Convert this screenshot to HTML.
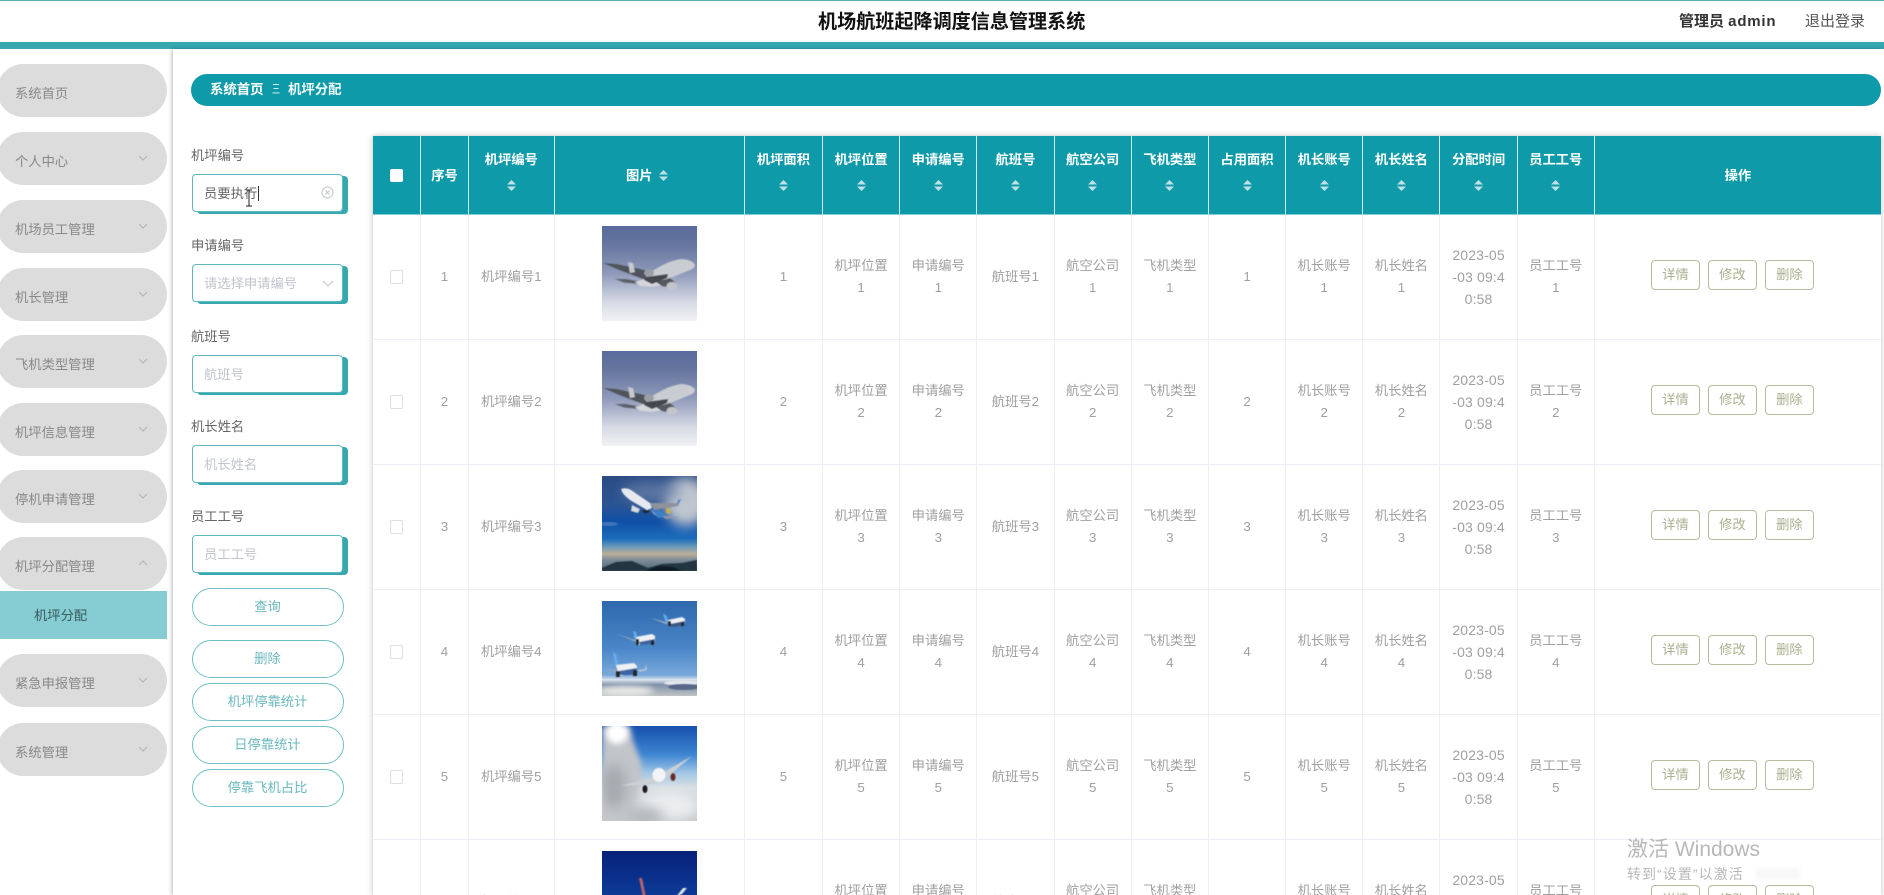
<!DOCTYPE html>
<html lang="zh-CN">
<head>
<meta charset="utf-8">
<title>机场航班起降调度信息管理系统</title>
<style>
*{box-sizing:border-box;margin:0;padding:0}
html,body{width:1884px;height:895px;overflow:hidden;background:#fff}
body{font-family:"Liberation Sans","Noto Sans CJK SC",sans-serif;font-size:13.3px;color:#a0a0a0}
#w{position:relative;width:1884px;height:895px;overflow:hidden;filter:blur(.35px)}
.a{position:absolute}
.pill{position:absolute;left:-3px;width:170px;height:53px;border-radius:27px;background:#dcdcdc;color:#888;padding-left:18px;line-height:59px;white-space:nowrap}
.pill svg{position:absolute;left:141px;top:23px}
.lab{position:absolute;left:191px;color:#666;line-height:20px}
.inp{position:absolute;left:192px;width:151px;height:38px;background:#fff;border:1px solid #5fb8be;border-radius:4px;box-shadow:5px 2px 0 #37a8b0;line-height:38px;padding-left:11px;color:#c0c4cc}
.btn{position:absolute;left:191.5px;width:152px;height:38px;border:1px solid #6fc0c7;border-radius:19px;background:#fff;color:#6bb8be;text-align:center;line-height:35px}
table{position:absolute;left:373px;top:136px;width:1508px;table-layout:fixed;border-collapse:separate;border-spacing:0}
th{height:78.5px;background:#0f9aaa;color:#fff;font-weight:700;border-right:1px solid #cfeaed;border-bottom:1px solid #7fd0d8;position:relative;text-align:center;white-space:nowrap;font-size:13.3px}
th:last-child{border-right:0}
th span{position:absolute;left:0;right:0;top:13px;line-height:22px}
th svg.s{position:absolute;left:50%;margin-left:-4.5px;top:44px}
td{height:125px;border-right:1px solid #ebeef5;border-bottom:1px solid #ebeef5;text-align:center;vertical-align:middle;line-height:22px;white-space:nowrap;padding:0}
td:last-child{border-right:0}
td.d{font-size:14px;letter-spacing:.15px}
.cb{display:inline-block;width:13px;height:14px;border:1px solid #dcdfe6;border-radius:2px;background:#fff;vertical-align:middle}
.op{display:inline-block;width:48.6px;height:30px;border:1px solid #b5bca0;border-radius:4px;color:#a9b18f;line-height:27px;margin:0 4.2px;position:relative;top:-2px;left:-5.5px;background:#fff}
td svg.im{display:block;margin:0 auto;width:95px;height:95px;position:relative;top:-3px}
</style>
</head>
<body>
<div id="w">
<svg width="0" height="0" style="position:absolute">
<defs>
<linearGradient id="g1" x1="0" y1="0" x2="0" y2="1"><stop offset="0" stop-color="#5a6a9c"/><stop offset=".2" stop-color="#66769f"/><stop offset=".5" stop-color="#8f9abb"/><stop offset=".8" stop-color="#d6dae4"/><stop offset="1" stop-color="#f1f2f4"/></linearGradient>
<linearGradient id="g3" x1="0" y1="0" x2="0" y2="1"><stop offset="0" stop-color="#2c4c84"/><stop offset=".3" stop-color="#2b5493"/><stop offset=".48" stop-color="#0f50a6"/><stop offset=".66" stop-color="#1c6cbc"/><stop offset=".75" stop-color="#6f9cb8"/><stop offset=".82" stop-color="#bcae94"/><stop offset=".88" stop-color="#7f8d98"/><stop offset="1" stop-color="#4f6474"/></linearGradient>
<linearGradient id="g4" x1="0" y1="0" x2="0" y2="1"><stop offset="0" stop-color="#2f68ad"/><stop offset=".5" stop-color="#4a86c8"/><stop offset=".78" stop-color="#78a8da"/><stop offset=".83" stop-color="#dbe4ee"/><stop offset=".88" stop-color="#7f91aa"/><stop offset="1" stop-color="#bfc3c4"/></linearGradient>
<linearGradient id="g5" x1="0" y1="0" x2="0" y2="1"><stop offset="0" stop-color="#1550ae"/><stop offset=".3" stop-color="#3e86d2"/><stop offset=".5" stop-color="#a4c8e6"/><stop offset=".65" stop-color="#d8dee2"/><stop offset="1" stop-color="#c6c8ca"/></linearGradient>
<linearGradient id="g6" x1="0" y1="0" x2="0" y2="1"><stop offset="0" stop-color="#06217a"/><stop offset="1" stop-color="#1458b8"/></linearGradient>
<filter id="b1" x="-20%" y="-20%" width="140%" height="140%"><feGaussianBlur stdDeviation=".6"/></filter>
<filter id="b2" x="-40%" y="-40%" width="180%" height="180%"><feGaussianBlur stdDeviation="3"/></filter>
<filter id="b3" x="-40%" y="-40%" width="180%" height="180%"><feGaussianBlur stdDeviation="6"/></filter>
<symbol id="pA" viewBox="0 0 95 95">
<rect width="95" height="95" fill="url(#g1)"/>
<g filter="url(#b1)">
<path d="M1 37 L14 38 L38 43 L64 50 L60 55 L44 54 L20 45Z" fill="#50535c"/>
<path d="M13 53 L24 53 L40 56 L38 58 L22 56.500Z" fill="#5c606a"/>
<path d="M33 56 L46 52 L58 56 L66 58 L50 61 L38 60Z" fill="#d3d5d8"/>
<path d="M26 36 L31 37 L33 46 L28 47Z" fill="#c5c8cc"/>
<path d="M93 39 Q91 34 80 33 Q68 34 52 44 L44 50 L50 56 L66 53 L88 44 Q93 42 93 39Z" fill="#c9ccd1"/>
<path d="M44 51 L66 48 L65 52 L50 58 L42 54Z" fill="#44474f"/>
<path d="M54 56 L68 52 L75 58 L72 62 L60 60Z" fill="#55585f"/>
<ellipse cx="70" cy="60" rx="5.500" ry="4" fill="#c2c5c9"/>
<ellipse cx="47" cy="47" rx="5" ry="3.500" fill="#9b9ea4"/>
</g>
</symbol>
</defs>
</svg>

<!-- header -->
<div class="a" style="left:0;top:0;width:1884px;height:1px;background:#5fb0b5"></div>
<div class="a" style="left:0;top:42px;width:1884px;height:7px;background:#37a8b0"></div>
<div class="a" style="left:818px;top:10px;width:270px;font-size:19.1px;font-weight:700;color:#111;line-height:26px;white-space:nowrap">机场航班起降调度信息管理系统</div>
<div class="a" style="left:1679px;top:11px;font-size:15px;font-weight:700;color:#333;line-height:22px;white-space:nowrap">管理员 <span style="letter-spacing:.8px">admin</span></div>
<div class="a" style="left:1805px;top:11px;font-size:15px;color:#555;line-height:22px;white-space:nowrap">退出登录</div>

<!-- dividers -->
<div class="a" style="left:173px;top:49px;width:1711px;height:846px;background:#fff;box-shadow:-1px 0 4px rgba(0,0,0,.28)"></div>
<div class="a" style="left:373px;top:136px;width:1508px;height:760px;background:#fff;box-shadow:0 0 6px rgba(0,0,0,.25)"></div>

<!-- sidebar -->
<div class="pill" style="top:64px">系统首页</div>
<div class="pill" style="top:132px">个人中心<svg width="10" height="7" viewBox="0 0 10 7"><path d="M1 1l4 4 4-4" fill="none" stroke="#b4b4b4"/></svg></div>
<div class="pill" style="top:199.5px">机场员工管理<svg width="10" height="7" viewBox="0 0 10 7"><path d="M1 1l4 4 4-4" fill="none" stroke="#b4b4b4"/></svg></div>
<div class="pill" style="top:267.5px">机长管理<svg width="10" height="7" viewBox="0 0 10 7"><path d="M1 1l4 4 4-4" fill="none" stroke="#b4b4b4"/></svg></div>
<div class="pill" style="top:335px">飞机类型管理<svg width="10" height="7" viewBox="0 0 10 7"><path d="M1 1l4 4 4-4" fill="none" stroke="#b4b4b4"/></svg></div>
<div class="pill" style="top:402.5px">机坪信息管理<svg width="10" height="7" viewBox="0 0 10 7"><path d="M1 1l4 4 4-4" fill="none" stroke="#b4b4b4"/></svg></div>
<div class="pill" style="top:470px">停机申请管理<svg width="10" height="7" viewBox="0 0 10 7"><path d="M1 1l4 4 4-4" fill="none" stroke="#b4b4b4"/></svg></div>
<div class="pill" style="top:537px">机坪分配管理<svg width="10" height="7" viewBox="0 0 10 7"><path d="M1 5l4-4 4 4" fill="none" stroke="#b4b4b4"/></svg></div>
<div class="a" style="left:0;top:591px;width:167px;height:48px;background:#86ccd3;color:#3a5a5e;padding-left:34px;line-height:50px">机坪分配</div>
<div class="pill" style="top:654px">紧急申报管理<svg width="10" height="7" viewBox="0 0 10 7"><path d="M1 1l4 4 4-4" fill="none" stroke="#b4b4b4"/></svg></div>
<div class="pill" style="top:722.5px">系统管理<svg width="10" height="7" viewBox="0 0 10 7"><path d="M1 1l4 4 4-4" fill="none" stroke="#b4b4b4"/></svg></div>

<!-- breadcrumb -->
<div class="a" style="left:191px;top:74px;width:1690px;height:32px;border-radius:16px;background:#0f9aaa"></div>
<div class="a" style="left:210px;top:80px;color:#fff;font-weight:700;font-size:13.4px;line-height:20px">系统首页</div>
<div class="a" style="left:272px;top:80px;color:#eef9fa;font-size:8px;line-height:20px;transform:scaleY(1.5);transform-origin:center">三</div>
<div class="a" style="left:288px;top:80px;color:#f2fafa;font-size:13.4px;font-weight:700;line-height:20px">机坪分配</div>

<!-- form -->
<div class="lab" style="top:146px">机坪编号</div>
<div class="inp" style="top:173.5px;color:#666">员要执行
<svg class="a" style="left:128px;top:11px" width="13" height="13" viewBox="0 0 13 13"><circle cx="6.5" cy="6.5" r="5.5" fill="none" stroke="#c0c4cc"/><path d="M4.5 4.5l4 4M8.500 4.500l-4 4" stroke="#c0c4cc"/></svg>
</div>
<div class="a" style="left:258px;top:186px;width:1px;height:15px;background:#333"></div>
<svg class="a" style="left:245px;top:189px" width="8" height="19" viewBox="0 0 8 19"><path d="M1 1h6M4 1v16M1 17h6" fill="none" stroke="#222"/></svg>

<div class="lab" style="top:236px">申请编号</div>
<div class="inp" style="top:264px">请选择申请编号
<svg class="a" style="left:129px;top:15px" width="12" height="8" viewBox="0 0 12 8"><path d="M1 1l5 5 5-5" fill="none" stroke="#c0c4cc"/></svg>
</div>
<div class="lab" style="top:326.500px">航班号</div>
<div class="inp" style="top:354.500px">航班号</div>
<div class="lab" style="top:416.500px">机长姓名</div>
<div class="inp" style="top:445px">机长姓名</div>
<div class="lab" style="top:507px">员工工号</div>
<div class="inp" style="top:535px">员工工号</div>

<div class="btn" style="top:588px">查询</div>
<div class="btn" style="top:640px">删除</div>
<div class="btn" style="top:683px">机坪停靠统计</div>
<div class="btn" style="top:726px">日停靠统计</div>
<div class="btn" style="top:768.500px">停靠飞机占比</div>

<!-- table -->
<table>
<colgroup><col style="width:48px"><col style="width:48px"><col style="width:85.500px"><col style="width:190.300px"><col style="width:78.200px"><col style="width:77.200px"><col style="width:77.200px"><col style="width:77.200px"><col style="width:77.200px"><col style="width:77.200px"><col style="width:77.200px"><col style="width:77.200px"><col style="width:77.200px"><col style="width:77.200px"><col style="width:77.200px"><col></colgroup>
<thead><tr>
<th><i class="a" style="left:17px;top:33px;width:13px;height:13px;background:#fff;border-radius:2px"></i></th>
<th>序号</th>
<th><span>机坪编号</span><svg class="s" width="9" height="11" viewBox="0 0 9 11"><path d="M0 4.500L4.500 0 9 4.500zM0 6.500h9L4.500 11z" fill="#bfe0e4"/></svg></th>
<th style="padding-right:4px">图片 <svg width="9" height="11" viewBox="0 0 9 11" style="margin-left:3px;vertical-align:-1px"><path d="M0 4.500L4.500 0 9 4.500zM0 6.500h9L4.500 11z" fill="#bfe0e4"/></svg></th>
<th><span>机坪面积</span><svg class="s" width="9" height="11" viewBox="0 0 9 11"><path d="M0 4.500L4.500 0 9 4.500zM0 6.500h9L4.500 11z" fill="#bfe0e4"/></svg></th>
<th><span>机坪位置</span><svg class="s" width="9" height="11" viewBox="0 0 9 11"><path d="M0 4.500L4.500 0 9 4.500zM0 6.500h9L4.500 11z" fill="#bfe0e4"/></svg></th>
<th><span>申请编号</span><svg class="s" width="9" height="11" viewBox="0 0 9 11"><path d="M0 4.500L4.500 0 9 4.500zM0 6.500h9L4.500 11z" fill="#bfe0e4"/></svg></th>
<th><span>航班号</span><svg class="s" width="9" height="11" viewBox="0 0 9 11"><path d="M0 4.500L4.500 0 9 4.500zM0 6.500h9L4.500 11z" fill="#bfe0e4"/></svg></th>
<th><span>航空公司</span><svg class="s" width="9" height="11" viewBox="0 0 9 11"><path d="M0 4.500L4.500 0 9 4.500zM0 6.500h9L4.500 11z" fill="#bfe0e4"/></svg></th>
<th><span>飞机类型</span><svg class="s" width="9" height="11" viewBox="0 0 9 11"><path d="M0 4.500L4.500 0 9 4.500zM0 6.500h9L4.500 11z" fill="#bfe0e4"/></svg></th>
<th><span>占用面积</span><svg class="s" width="9" height="11" viewBox="0 0 9 11"><path d="M0 4.500L4.500 0 9 4.500zM0 6.500h9L4.500 11z" fill="#bfe0e4"/></svg></th>
<th><span>机长账号</span><svg class="s" width="9" height="11" viewBox="0 0 9 11"><path d="M0 4.500L4.500 0 9 4.500zM0 6.500h9L4.500 11z" fill="#bfe0e4"/></svg></th>
<th><span>机长姓名</span><svg class="s" width="9" height="11" viewBox="0 0 9 11"><path d="M0 4.500L4.500 0 9 4.500zM0 6.500h9L4.500 11z" fill="#bfe0e4"/></svg></th>
<th><span>分配时间</span><svg class="s" width="9" height="11" viewBox="0 0 9 11"><path d="M0 4.500L4.500 0 9 4.500zM0 6.500h9L4.500 11z" fill="#bfe0e4"/></svg></th>
<th><span>员工工号</span><svg class="s" width="9" height="11" viewBox="0 0 9 11"><path d="M0 4.500L4.500 0 9 4.500zM0 6.500h9L4.500 11z" fill="#bfe0e4"/></svg></th>
<th>操作</th>
</tr></thead>
<tbody>
<tr><td><i class="cb"></i></td><td>1</td><td>机坪编号1</td>
<td><svg class="im" viewBox="0 0 95 95"><use href="#pA"/></svg></td>
<td>1</td><td>机坪位置<br>1</td><td>申请编号<br>1</td><td>航班号1</td><td>航空公司<br>1</td><td>飞机类型<br>1</td><td>1</td><td>机长账号<br>1</td><td>机长姓名<br>1</td><td class="d">2023-05<br>-03 09:4<br>0:58</td><td>员工工号<br>1</td>
<td><span class="op">详情</span><span class="op">修改</span><span class="op">删除</span></td></tr>

<tr><td><i class="cb"></i></td><td>2</td><td>机坪编号2</td>
<td><svg class="im" viewBox="0 0 95 95"><use href="#pA"/></svg></td>
<td>2</td><td>机坪位置<br>2</td><td>申请编号<br>2</td><td>航班号2</td><td>航空公司<br>2</td><td>飞机类型<br>2</td><td>2</td><td>机长账号<br>2</td><td>机长姓名<br>2</td><td class="d">2023-05<br>-03 09:4<br>0:58</td><td>员工工号<br>2</td>
<td><span class="op">详情</span><span class="op">修改</span><span class="op">删除</span></td></tr>

<tr><td><i class="cb"></i></td><td>3</td><td>机坪编号3</td>
<td><svg class="im" viewBox="0 0 95 95">
<rect width="95" height="95" fill="url(#g3)"/>
<ellipse cx="84" cy="26" rx="22" ry="24" fill="#c0c6d0" filter="url(#b3)"/>
<ellipse cx="50" cy="16" rx="30" ry="10" fill="#6f85aa" opacity=".7" filter="url(#b3)"/>
<ellipse cx="6" cy="48" rx="10" ry="2" fill="#5f8cc4" opacity=".6" filter="url(#b1)"/>
<path d="M0 92 L14 86 L30 85 L46 92 L60 88 L80 87 L95 84 V95 H0Z" fill="#22343f" filter="url(#b1)"/>
<path d="M44 95 L56 90 L70 91 L80 95Z" fill="#101c26" filter="url(#b1)"/>
<g filter="url(#b1)">
<path d="M19 13 Q24 11 29 14 L48 27 L50 32 L45 34 L28 24 Q20 18 19 13Z" fill="#e6e9ee"/>
<path d="M48 27 L74 27 L78 24 L76 30 L52 34Z" fill="#8d929c"/>
<path d="M76 24 L79 23 L76 29Z" fill="#3a80d4"/>
<path d="M48 33 L58 34 L66 41 L56 42 Z" fill="#3d7ec4"/>
<path d="M47 33 L55 40 L52 38Z" fill="#f0f2f4"/>
<path d="M64 32 L69 33 L68 38 L64 37Z" fill="#c8b24a"/>
<path d="M60 40 L78 41 L64 43Z" fill="#9298a2"/>
<path d="M30 29 L38 33 L36 37 L29 35Z" fill="#d8dce0"/>
<path d="M40 34 L48 34 L46 37 L42 37Z" fill="#22282e"/>
</g>
</svg></td>
<td>3</td><td>机坪位置<br>3</td><td>申请编号<br>3</td><td>航班号3</td><td>航空公司<br>3</td><td>飞机类型<br>3</td><td>3</td><td>机长账号<br>3</td><td>机长姓名<br>3</td><td class="d">2023-05<br>-03 09:4<br>0:58</td><td>员工工号<br>3</td>
<td><span class="op">详情</span><span class="op">修改</span><span class="op">删除</span></td></tr>

<tr><td><i class="cb"></i></td><td>4</td><td>机坪编号4</td>
<td><svg class="im" viewBox="0 0 95 95">
<rect width="95" height="95" fill="url(#g4)"/>
<ellipse cx="24" cy="90" rx="28" ry="5" fill="#e8e8e4" filter="url(#b2)"/>
<ellipse cx="80" cy="82" rx="18" ry="2.500" fill="#e4e8ec" filter="url(#b1)"/>
<ellipse cx="82" cy="86" rx="16" ry="3" fill="#58688a" filter="url(#b1)"/>
<g filter="url(#b1)">
<path d="M49 17 L64 21 L66 24Z" fill="#9ba6b6"/><path d="M61 13 L64 14 L67 22 L64 22Z" fill="#62aeea"/>
<path d="M66 19 L80 16 L83 18 L83 22 L68 25Z" fill="#eef0f4"/><path d="M68 23 L83 20 L82 25 L78 25 L70 26Z" fill="#3d5a88"/><rect x="66" y="20" width="3" height="5" fill="#20252c"/><rect x="79" y="21" width="3" height="4" fill="#20252c"/>
<path d="M15 33 L33 39 L34 41Z" fill="#9ba6b6"/><path d="M31 30 L34 31 L36 40 L33 40Z" fill="#62aeea"/>
<path d="M34 36 L50 33 L53 35 L53 40 L37 44Z" fill="#eef0f4"/><path d="M37 41 L53 38 L52 43 L47 43 L38 44Z" fill="#3d64a0"/><rect x="34" y="38" width="3" height="6" fill="#20252c"/><rect x="49" y="39" width="3" height="5" fill="#20252c"/>
<path d="M0 68 L14 69 L15 71Z" fill="#9ba6b6"/><path d="M11 51 L14 53 L17 67 L14 67Z" fill="#62aeea"/>
<path d="M14 64 L32 62 L35 65 L35 71 L17 75Z" fill="#eef0f4"/><path d="M17 70 L35 67 L34 73 L28 74 L18 74Z" fill="#3d64a0"/><rect x="14" y="70" width="4" height="6" fill="#20252c"/><rect x="31" y="69" width="4" height="6" fill="#20252c"/>
<path d="M36 69 L43 68 L44 63 L45 69 L38 71Z" fill="#b9c4d2"/>
</g>
</svg></td>
<td>4</td><td>机坪位置<br>4</td><td>申请编号<br>4</td><td>航班号4</td><td>航空公司<br>4</td><td>飞机类型<br>4</td><td>4</td><td>机长账号<br>4</td><td>机长姓名<br>4</td><td class="d">2023-05<br>-03 09:4<br>0:58</td><td>员工工号<br>4</td>
<td><span class="op">详情</span><span class="op">修改</span><span class="op">删除</span></td></tr>

<tr><td><i class="cb"></i></td><td>5</td><td>机坪编号5</td>
<td><svg class="im" viewBox="0 0 95 95">
<rect width="95" height="95" fill="url(#g5)"/>
<path d="M0 0 H28 Q30 15 36 28 Q42 40 38 60 L30 95 H0Z" fill="#c2c5c9" filter="url(#b2)"/>
<ellipse cx="12" cy="60" rx="12" ry="22" fill="#a6a9ae" filter="url(#b3)"/>
<ellipse cx="15" cy="7" rx="11" ry="11" fill="#fff" filter="url(#b2)"/>
<ellipse cx="68" cy="80" rx="28" ry="14" fill="#eceef0" filter="url(#b3)"/>
<ellipse cx="45" cy="90" rx="18" ry="8" fill="#b2b5b8" filter="url(#b3)"/>
<g filter="url(#b1)">
<path d="M18 60 L50 52 L64 45 L90 30 L64 52 L52 58Z" fill="#ccd0d4"/>
<ellipse cx="57" cy="49" rx="6.500" ry="7" fill="#f2f4f6"/>
<ellipse cx="71" cy="51" rx="2.500" ry="4" fill="#6a2a26"/>
<ellipse cx="43" cy="63" rx="2.500" ry="4" fill="#1d1c20"/>
</g>
</svg></td>
<td>5</td><td>机坪位置<br>5</td><td>申请编号<br>5</td><td>航班号5</td><td>航空公司<br>5</td><td>飞机类型<br>5</td><td>5</td><td>机长账号<br>5</td><td>机长姓名<br>5</td><td class="d">2023-05<br>-03 09:4<br>0:58</td><td>员工工号<br>5</td>
<td><span class="op">详情</span><span class="op">修改</span><span class="op">删除</span></td></tr>

<tr><td><i class="cb"></i></td><td>6</td><td>机坪编号6</td>
<td><svg class="im" viewBox="0 0 95 95">
<rect width="95" height="95" fill="url(#g6)"/>
<g filter="url(#b1)"><path d="M37 27 L40 27 L44 46 L41 46Z" fill="#b8606c"/><path d="M81 37 L85 37 L80 43 L74 46Z" fill="#dfe4ea"/></g>
</svg></td>
<td>6</td><td>机坪位置<br>6</td><td>申请编号<br>6</td><td>航班号6</td><td>航空公司<br>6</td><td>飞机类型<br>6</td><td>6</td><td>机长账号<br>6</td><td>机长姓名<br>6</td><td class="d">2023-05<br>-03 09:4<br>0:58</td><td>员工工号<br>6</td>
<td><span class="op">详情</span><span class="op">修改</span><span class="op">删除</span></td></tr>
</tbody>
</table>

<!-- watermark -->
<div class="a" style="left:1627px;top:836px;font-size:21px;color:#b8b8b8;line-height:28px;white-space:nowrap">激活 Windows</div>
<div class="a" style="left:1627px;top:864px;font-size:14px;letter-spacing:1.05px;color:#b8b8b8;line-height:20px;white-space:nowrap">转到“设置”以激活</div>
<div class="a" style="left:1756px;top:868px;width:44px;height:11px;background:#f7f7f7;filter:blur(2px)"></div>
</div>
</body>
</html>
